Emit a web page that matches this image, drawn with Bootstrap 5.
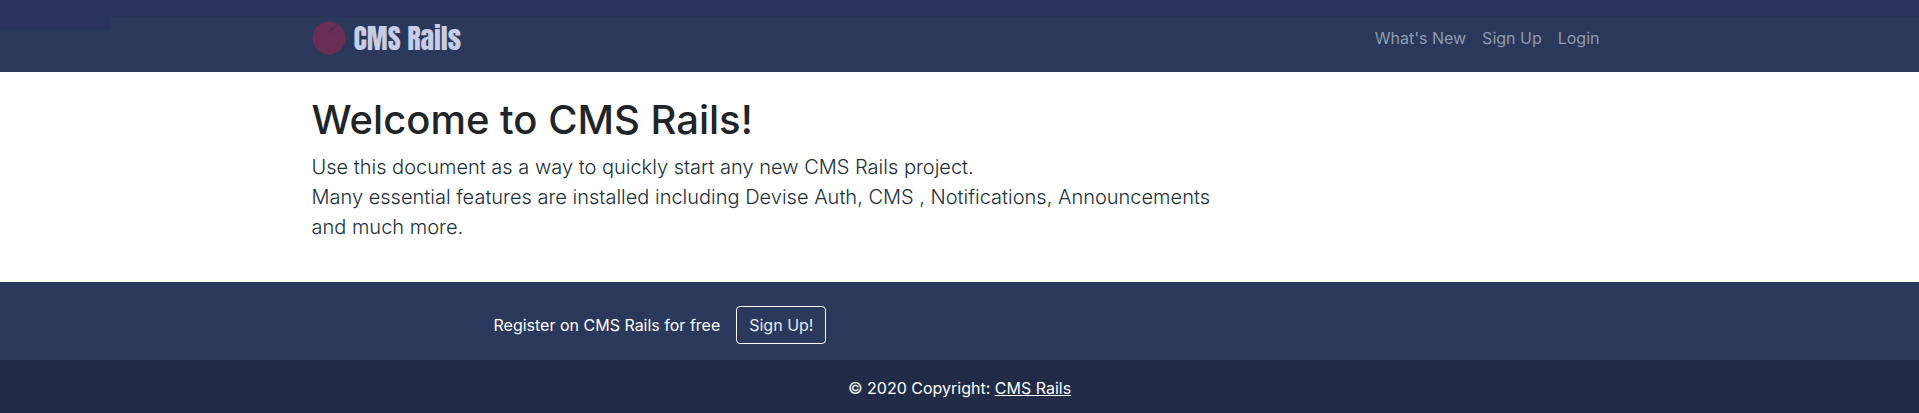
<!DOCTYPE html>
<html lang="en">
<head>
<meta charset="utf-8">
<meta name="viewport" content="width=device-width, initial-scale=1">
<title>CMS Rails</title>
<link href="https://cdn.jsdelivr.net/npm/bootstrap@5.3.0/dist/css/bootstrap.min.css" rel="stylesheet">
<style>
  body { font-family: Inter, "Liberation Sans", sans-serif; color: #212529; background: #fff; }
  .site-nav {
    padding: 18px 0 14px;
    background: linear-gradient(#2b325d, #2b325d) 0 0 / 110px 30px no-repeat,
                linear-gradient(#2b325d, #2b325d) 0 0 / 100% 17px no-repeat, #29385b;
  }
  .brand-text { font-family: Anton, Impact, "Liberation Sans Narrow", "Liberation Sans", sans-serif; font-weight: 400; font-size: 28px; line-height: 40px; color: #c8cce4; }
  .site-nav .nav-link { color: #939bb2; }
  .lead-copy { font-size: 20px; font-weight: 300; line-height: 30px; color: #20303a; }
  .register-band { background: #29385b; }
  .register-row { max-width: 932px; }
  .register-row .btn { border-radius: 4px; color: #e4e8f2; border-color: #fff; }
  .copyright-band { background: #212b47; padding: 16px 16px 13px; }
</style>
</head>
<body>
<nav class="navbar navbar-expand site-nav">
  <div class="container">
    <a class="navbar-brand d-flex align-items-center gap-2 p-0 m-0" href="#">
      <svg width="34" height="34" viewBox="0 0 34 34" aria-hidden="true">
        <circle cx="17" cy="17" r="16.5" fill="#6a2d55"/>
        <g fill="none" stroke="#5f2f56" stroke-width="1" stroke-linecap="round">
          <path d="M3 13l6-6M5 18l8-9M17 12l7-7M19 14l4-4M9 25l3-4M15 29l3-3M24 25l4-5M5 23l4 3M21 30l3-3"/>
        </g>
        <path d="M20 8l5-4M17 11l3-3" stroke="#4a3158" stroke-width="1.5" stroke-linecap="round"/>
      </svg>
      <span class="brand-text">CMS Rails</span>
    </a>
    <ul class="navbar-nav ms-auto">
      <li class="nav-item"><a class="nav-link" href="#">What's New</a></li>
      <li class="nav-item"><a class="nav-link" href="#">Sign Up</a></li>
      <li class="nav-item"><a class="nav-link pe-2" href="#">Login</a></li>
    </ul>
  </div>
</nav>
<main class="container py-4">
  <h1>Welcome to CMS Rails!</h1>
  <p class="lead-copy mb-3">Use this document as a way to quickly start any new CMS Rails project.<br>
  Many essential features are installed including Devise Auth, CMS , Notifications, Announcements<br>
  and much more.</p>
</main>
<footer class="text-white">
  <div class="register-band pt-4 pb-3">
    <div class="register-row mx-auto d-flex align-items-center gap-3">
      <span>Register on CMS Rails for free</span>
      <button type="button" class="btn btn-outline-light">Sign Up!</button>
    </div>
  </div>
  <div class="copyright-band text-center">© 2020 Copyright: <a class="text-white" href="#">CMS Rails</a></div>
</footer>
<script src="https://cdn.jsdelivr.net/npm/bootstrap@5.3.0/dist/js/bootstrap.bundle.min.js"></script>
</body>
</html>
